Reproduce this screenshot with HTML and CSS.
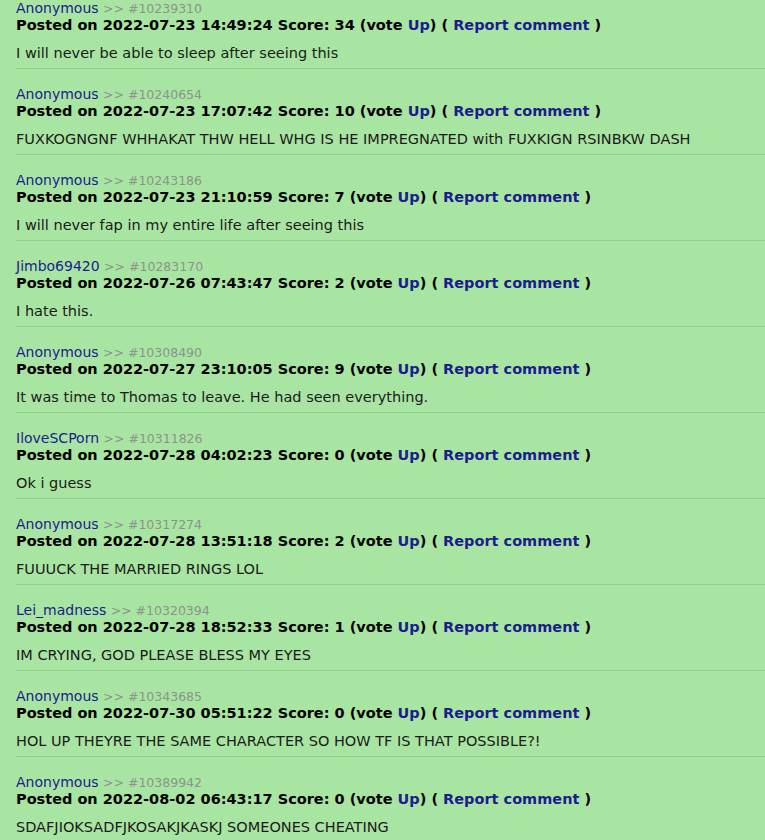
FILE: index.html
```html
<!DOCTYPE html>
<html lang="en">
<head>
    <meta charset="UTF-8">
    <title>Comments</title>
    <link rel="stylesheet" href="styles.css">
</head>
<body>
    <div class="comments">
        <div class="comment">
            <div class="author"><a href="#">Anonymous</a> <span class="cid">&gt;&gt; #10239310</span></div>
            <div class="meta">Posted on 2022-07-23 14:49:24 Score: 34 (vote <a href="#">Up</a>) ( <a href="#">Report comment</a> )</div>
            <p class="body">I will never be able to sleep after seeing this</p>
        </div>
        <div class="comment">
            <div class="author"><a href="#">Anonymous</a> <span class="cid">&gt;&gt; #10240654</span></div>
            <div class="meta">Posted on 2022-07-23 17:07:42 Score: 10 (vote <a href="#">Up</a>) ( <a href="#">Report comment</a> )</div>
            <p class="body">FUXKOGNGNF WHHAKAT THW HELL WHG IS HE IMPREGNATED with FUXKIGN RSINBKW DASH</p>
        </div>
        <div class="comment">
            <div class="author"><a href="#">Anonymous</a> <span class="cid">&gt;&gt; #10243186</span></div>
            <div class="meta">Posted on 2022-07-23 21:10:59 Score: 7 (vote <a href="#">Up</a>) ( <a href="#">Report comment</a> )</div>
            <p class="body">I will never fap in my entire life after seeing this</p>
        </div>
        <div class="comment">
            <div class="author"><a href="#">Jimbo69420</a> <span class="cid">&gt;&gt; #10283170</span></div>
            <div class="meta">Posted on 2022-07-26 07:43:47 Score: 2 (vote <a href="#">Up</a>) ( <a href="#">Report comment</a> )</div>
            <p class="body">I hate this.</p>
        </div>
        <div class="comment">
            <div class="author"><a href="#">Anonymous</a> <span class="cid">&gt;&gt; #10308490</span></div>
            <div class="meta">Posted on 2022-07-27 23:10:05 Score: 9 (vote <a href="#">Up</a>) ( <a href="#">Report comment</a> )</div>
            <p class="body">It was time to Thomas to leave. He had seen everything.</p>
        </div>
        <div class="comment">
            <div class="author"><a href="#">IloveSCPorn</a> <span class="cid">&gt;&gt; #10311826</span></div>
            <div class="meta">Posted on 2022-07-28 04:02:23 Score: 0 (vote <a href="#">Up</a>) ( <a href="#">Report comment</a> )</div>
            <p class="body">Ok i guess</p>
        </div>
        <div class="comment">
            <div class="author"><a href="#">Anonymous</a> <span class="cid">&gt;&gt; #10317274</span></div>
            <div class="meta">Posted on 2022-07-28 13:51:18 Score: 2 (vote <a href="#">Up</a>) ( <a href="#">Report comment</a> )</div>
            <p class="body">FUUUCK THE MARRIED RINGS LOL</p>
        </div>
        <div class="comment">
            <div class="author"><a href="#">Lei_madness</a> <span class="cid">&gt;&gt; #10320394</span></div>
            <div class="meta">Posted on 2022-07-28 18:52:33 Score: 1 (vote <a href="#">Up</a>) ( <a href="#">Report comment</a> )</div>
            <p class="body">IM CRYING, GOD PLEASE BLESS MY EYES</p>
        </div>
        <div class="comment">
            <div class="author"><a href="#">Anonymous</a> <span class="cid">&gt;&gt; #10343685</span></div>
            <div class="meta">Posted on 2022-07-30 05:51:22 Score: 0 (vote <a href="#">Up</a>) ( <a href="#">Report comment</a> )</div>
            <p class="body">HOL UP THEYRE THE SAME CHARACTER SO HOW TF IS THAT POSSIBLE?!</p>
        </div>
        <div class="comment">
            <div class="author"><a href="#">Anonymous</a> <span class="cid">&gt;&gt; #10389942</span></div>
            <div class="meta">Posted on 2022-08-02 06:43:17 Score: 0 (vote <a href="#">Up</a>) ( <a href="#">Report comment</a> )</div>
            <p class="body">SDAFJIOKSADFJKOSAKJKASKJ SOMEONES CHEATING</p>
        </div>
    </div>
</body>
</html>
```

FILE: styles.css
```css
body {
    margin: 0;
    background-color: #a9e5a2;
    font-family: "DejaVu Sans", Verdana, sans-serif;
    font-size: 14.5px;
    color: #1a1a1a;
}

a {
    color: #1c1c8c;
    text-decoration: none;
}

.comments {
    margin-left: 16px;
}

.comment {
    padding: 17px 0 6px;
    border-bottom: 1px solid #93cf8c;
}

.comment:first-child {
    padding-top: 0;
}

.author {
    height: 17px;
    line-height: 17px;
    font-size: 14px;
}

.cid {
    color: #8a948a;
    font-size: 12.5px;
}

.meta {
    line-height: 17px;
    font-weight: bold;
    color: #000;
}

.body {
    margin: 10px 0 0;
    line-height: 18px;
}
```
